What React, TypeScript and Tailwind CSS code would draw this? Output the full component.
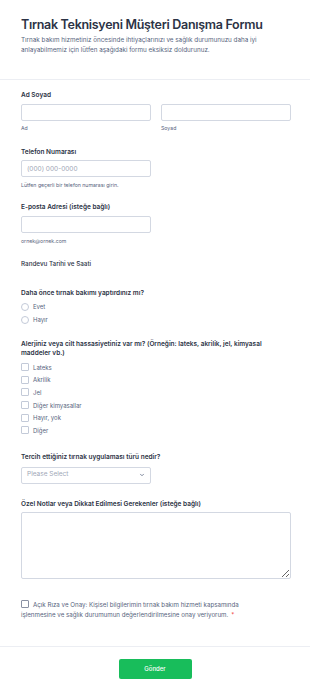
import { ChevronDown } from "lucide-react";

const font = { fontFamily: "Inter, 'Noto Sans', sans-serif" };

const allergies = ["Lateks", "Akrilik", "Jel", "Diğer kimyasallar", "Hayır, yok", "Diğer"];

const Label = ({ children, className = "" }: { children: React.ReactNode; className?: string }) => (
  <p className={`text-[6.5px] leading-[10px] font-semibold text-[#2c3345] ${className}`}>{children}</p>
);

const Hint = ({ children, className = "" }: { children: React.ReactNode; className?: string }) => (
  <p className={`text-[5.2px] leading-[8px] text-[#57647e] ${className}`}>{children}</p>
);

const inputCls =
  "block h-[17px] w-[130px] rounded-[2px] border border-[#d3d8e2] bg-white px-[5px] text-[6.5px] text-[#2c3345] placeholder:text-[#a0a6b6] outline-none";

export default function App() {
  return (
    <div style={font} className="min-h-[692px] w-[310px] bg-white">
      {/* Header */}
      <header className="border-b border-[#eceef3] px-[21px] pt-[17px] pb-[24px]">
        <h1 className="whitespace-nowrap text-[12.5px] leading-[16px] font-semibold tracking-[-0.3px] text-[#2c3345]">
          Tırnak Teknisyeni Müşteri Danışma Formu
        </h1>
        <p className="mt-[2px] text-[6.3px] leading-[10px] text-[#57647e]">
          Tırnak bakım hizmetiniz öncesinde ihtiyaçlarınızı ve sağlık durumunuzu daha iyi anlayabilmemiz için lütfen
          aşağıdaki formu eksiksiz doldurunuz.
        </p>
      </header>

      <form className="px-[21px]">
        {/* Ad Soyad */}
        <Label className="mt-[10px]">Ad Soyad</Label>
        <div className="mt-[4px] flex gap-[10px]">
          <div>
            <input className={inputCls} />
            <Hint className="mt-[3px]">Ad</Hint>
          </div>
          <div>
            <input className={inputCls} />
            <Hint className="mt-[3px]">Soyad</Hint>
          </div>
        </div>

        {/* Telefon */}
        <Label className="mt-[15px]">Telefon Numarası</Label>
        <input className={`${inputCls} mt-[3px]`} placeholder="(000) 000-0000" />
        <Hint className="mt-[4px]">Lütfen geçerli bir telefon numarası girin.</Hint>

        {/* E-posta */}
        <Label className="mt-[13px]">E-posta Adresi (isteğe bağlı)</Label>
        <input className={`${inputCls} mt-[4px]`} />
        <Hint className="mt-[4px]">ornek@ornek.com</Hint>

        {/* Randevu */}
        <p className="mt-[14px] text-[6.3px] leading-[10px] font-medium text-[#2c3345]">Randevu Tarihi ve Saati</p>

        {/* Daha önce */}
        <Label className="mt-[19px]">Daha önce tırnak bakımı yaptırdınız mı?</Label>
        <div className="mt-[2px]">
          {["Evet", "Hayır"].map((o) => (
            <label key={o} className="flex h-[13px] items-center gap-[4px]">
              <span className="h-[8px] w-[8px] rounded-full border border-[#c3cad8] bg-white" />
              <span className="text-[6px] text-[#57647e]">{o}</span>
            </label>
          ))}
        </div>

        {/* Alerji */}
        <p className="mt-[14px] text-[6.5px] leading-[9px] font-semibold text-[#2c3345]">
          Alerjiniz veya cilt hassasiyetiniz var mı? (Örneğin: lateks, akrilik, jel, kimyasal maddeler vb.)
        </p>
        <div className="mt-[3px]">
          {allergies.map((o) => (
            <label key={o} className="flex h-[12.6px] items-center gap-[4px]">
              <span className="h-[8px] w-[8px] rounded-[1px] border border-[#c3cad8] bg-white" />
              <span className="text-[6px] text-[#57647e]">{o}</span>
            </label>
          ))}
        </div>

        {/* Tercih */}
        <Label className="mt-[15px]">Tercih ettiğiniz tırnak uygulaması türü nedir?</Label>
        <div className="mt-[5px] flex h-[17px] w-[130px] items-center justify-between rounded-[2px] border border-[#d3d8e2] bg-white pl-[5px] pr-[5px]">
          <span className="text-[6.5px] text-[#a0a6b6]">Please Select</span>
          <ChevronDown className="h-[6px] w-[6px] text-[#57647e]" strokeWidth={3} />
        </div>

        {/* Notlar */}
        <Label className="mt-[15px]">Özel Notlar veya Dikkat Edilmesi Gerekenler (isteğe bağlı)</Label>
        <textarea className="mt-[3px] block h-[67px] w-[270px] rounded-[2px] border border-[#d3d8e2] bg-white outline-none" />

        {/* Onay */}
        <p className="mt-[20px] w-[250px] text-[6.2px] leading-[10px] text-[#57647e]">
          <span className="mr-[4px] inline-block h-[8px] w-[8px] translate-y-[1px] rounded-[1px] border border-[#8a91a3] bg-white align-baseline" />
          Açık Rıza ve Onay: Kişisel bilgilerimin tırnak bakım hizmeti kapsamında işlenmesine ve sağlık durumumun
          değerlendirilmesine onay veriyorum.<span className="ml-[3px] text-[#f23a3c]">*</span>
        </p>
      </form>

      <div className="mt-[26px] flex justify-center border-t border-[#eceef3] pt-[12px] pb-[16px]">
        <button className="h-[20px] w-[73px] rounded-[2px] bg-[#18bd5b] text-[6px] font-medium text-white">
          Gönder
        </button>
      </div>
    </div>
  );
}
